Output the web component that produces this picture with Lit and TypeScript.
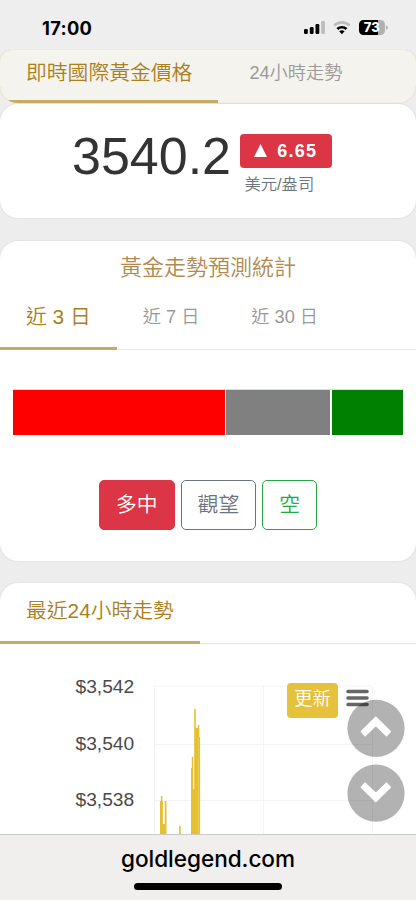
import { LitElement, html, css } from "lit";
import { customElement, property } from "lit/decorators.js";
import { classMap } from "lit/directives/class-map.js";

@customElement("status-bar")
class StatusBar extends LitElement {
  static styles = css`
    :host { display: flex; height: 50px; padding: 0 28px 0 42px; align-items: center; justify-content: space-between; box-sizing: border-box; background: #eee; }
    .time { font: 700 18.3px/22px Inter, sans-serif; color: #000; padding-top: 5px; letter-spacing: 0.3px; }
    svg { display: block; margin-top: 5px; }
    .level { font: 800 13px Inter, sans-serif; fill: #fff; }
  `;
  render() {
    return html`
      <span class="time">17:00</span>
      <svg width="86" height="18" viewBox="302 19 86 18">
        <rect x="304" y="29" width="3.8" height="5" rx="1.2"/>
        <rect x="309.8" y="27" width="3.8" height="7" rx="1.2"/>
        <rect x="315.5" y="24" width="3.8" height="10" rx="1.2"/>
        <rect x="321.2" y="21" width="3.8" height="13" rx="1.2" fill="#bdbdbd"/>
        <path d="M334.2 25.6a11 11 0 0 1 15.4 0" fill="none" stroke="#bdbdbd" stroke-width="2.8"/>
        <path d="M337.3 29a6.8 6.8 0 0 1 9.2 0" fill="none" stroke="#000" stroke-width="2.6"/>
        <path d="M339.2 31.3a4.2 4.2 0 0 1 5.4 0l-2.7 2.9z"/>
        <rect x="359" y="20" width="26" height="15" rx="4.6" fill="#b0b0b0"/>
        <path d="M363.6 20H378v15h-14.4a4.6 4.6 0 0 1-4.6-4.6v-5.8a4.6 4.6 0 0 1 4.6-4.6z"/>
        <path d="M386 25.2q1.8.6 1.8 2.3t-1.8 2.3z" fill="#b0b0b0"/>
        <text class="level" x="371.8" y="32.2" text-anchor="middle">73</text>
      </svg>`;
  }
}

@customElement("tab-strip")
class TabStrip extends LitElement {
  @property({ attribute: false }) tabs: string[] = [];
  static styles = css`
    :host { display: flex; gap: var(--gap, 0); box-sizing: border-box; font: 350 18.2px/24px "Liberation Sans", "Noto Sans CJK TC", sans-serif; color: #999; border-bottom: 1.5px solid #e6e6e6; }
    .tab { padding: var(--top, 10px) 26px 0; box-sizing: border-box; white-space: nowrap; }
    .active { font-size: 20.8px; color: #aa7f1c; border-bottom: 3px solid #c5ab67; margin-bottom: -1px; }
  `;
  render() {
    return this.tabs.map((t, i) => html`<div class=${classMap({ tab: true, active: i === 0 })}>${t}</div>`);
  }
}

@customElement("app-root")
class AppRoot extends LitElement {
  static styles = css`
    :host { display: flex; flex-direction: column; position: relative; height: 900px; overflow: hidden; background: #ededed; font: 350 20.8px/24px "Liberation Sans", "Noto Sans CJK TC", sans-serif; color: #333; }
    * { box-sizing: border-box; }
    .top { height: 53px; flex: none; background: #f5f3ee; border-radius: 12px 12px 18px 18px; overflow: hidden; box-shadow: 0 0 1px #d9bf80; }
    .top tab-strip { height: 53px; --top: 11px; --gap: 5px; border-color: #f2eee3; }
    .card { flex: none; background: #fff; border-radius: 18px; overflow: hidden; box-shadow: 0 0 2px #0002; }
    .price { display: flex; justify-content: center; height: 114px; margin: 1px 0 23px; padding: 22px 12px 0 0; gap: 8.5px; }
    .value { font-size: 52px; line-height: 60px; }
    .side { display: flex; flex-direction: column; padding-top: 8px; }
    .badge { display: flex; justify-content: center; align-items: center; gap: 10px; width: 92.5px; height: 33.5px; background: #dc3545; color: #fff; border-radius: 4px; font-size: 18px; font-weight: 700; letter-spacing: 1.3px; }
    .badge svg { fill: #fff; }
    .unit { font-size: 16.3px; color: #6c757d; padding: 4px 0 0 5px; }
    .forecast { height: 320px; margin-bottom: 22px; }
    .title { font-size: 22px; line-height: 30px; text-align: center; color: #b08a50; padding-top: 12px; }
    .forecast tab-strip { height: 67px; --top: 22px; }
    .ratio { display: flex; gap: 1.4px; height: 46px; margin: 39px 13px 45px; border-top: 1px solid #d8dede; }
    .seg { height: 45px; }
    .red { background: #f00; } .gray { background: #808080; } .green { background: #008000; }
    .actions { display: flex; justify-content: center; gap: 6px; }
    .btn { height: 50px; padding: 0 16px; border: 1.3px solid; border-radius: 5px; line-height: 47px; }
    .long { background: #dc3545; border-color: #dc3545; color: #fff; }
    .hold { color: #6c757d; } .short { color: #28a745; }
    .trend { height: 270px; border-radius: 18px 18px 0 0; }
    .trend tab-strip { height: 60.5px; --top: 16px; }
    .chart { position: relative; height: 190px; }
    .plot { display: block; }
    .plot text { font: 400 19.2px "Liberation Sans", sans-serif; fill: #4a4a4a; }
    .refresh { position: absolute; left: 287px; top: 39px; width: 51px; height: 35px; border-radius: 4px; background: #e6c23c; color: #fff; font-size: 18.2px; line-height: 33px; text-align: center; }
    .menu { position: absolute; left: 346px; top: 689px; }
    .nav { position: absolute; left: 347px; top: 699px; }
    footer { position: absolute; left: 0; right: 0; bottom: 0; height: 66px; display: flex; flex-direction: column; align-items: center; background: #f0efed; border-top: 1px solid #c9c9c9; padding-top: 9px; font: 550 22.6px/30px Inter, sans-serif; letter-spacing: -0.05px; color: #000; }
    .home { width: 148px; height: 6.5px; border-radius: 4px; background: #000; margin-top: 9px; }
  `;
  render() {
    return html`
      <status-bar></status-bar>
      <div class="top"><tab-strip .tabs=${["即時國際黃金價格", "24小時走勢"]}></tab-strip></div>
      <section class="card price">
        <div class="value">3540.2</div>
        <div class="side">
          <div class="badge"><svg width="13" height="13"><path d="M6.5 0 13 13H0z"/></svg><span>6.65</span></div>
          <div class="unit">美元/盎司</div>
        </div>
      </section>
      <section class="card forecast">
        <div class="title">黃金走勢預測統計</div>
        <tab-strip .tabs=${["近 3 日", "近 7 日", "近 30 日"]}></tab-strip>
        <div class="ratio">
          ${[["red", 212], ["gray", 104], ["green", 71.5]].map(([c, w]) => html`<div class="seg ${c}" style="flex:${w}"></div>`)}
        </div>
        <div class="actions">
          <div class="btn long">多中</div><div class="btn hold">觀望</div><div class="btn short">空</div>
        </div>
      </section>
      <section class="card trend">
        <tab-strip .tabs=${["最近24小時走勢"]}></tab-strip>
        <div class="chart">
          <svg class="plot" width="416" height="190" viewBox="0 644 416 190">
            <path d="M154 686H372.5M154 744.5H372.5M154 800.5H372.5M154.5 686V834M263.5 686V834M372.5 686V834" stroke="#f4f4f4" fill="none"/>
            <path fill="#e6c02f" d="M160 834V801h.9v-5h1.5v5h.5v23h1.9v-23h1.7v33zM179.1 834v-8h1.6v8zM191 834v-66h.8v-11h1.5v32h.9v-80h1.6v19h2v-3h1.5v12h.8v97z"/>
            <path fill="#edcf61" d="M198.2 834v-97h.8v97z"/>
            <text x="75.5" y="693">$3,542</text><text x="75.5" y="750">$3,540</text><text x="75.5" y="806">$3,538</text>
          </svg>
          <div class="refresh">更新</div>
        </div>
      </section>
      <svg class="menu" width="23" height="20"><path d="M2 2.5H21M2 9H21M2 15.5H21" stroke="#666" stroke-width="3.6" stroke-linecap="round"/></svg>
      <svg class="nav" width="58" height="124" viewBox="347 699 58 124">
        <g fill="#000" fill-opacity="0.3"><circle cx="376" cy="728.3" r="28.6"/><circle cx="376" cy="793.2" r="28.6"/></g>
        <path d="M375.8 717.3 390.2 731.5 386.5 735.6 375.8 725.2 365.1 735.6 361.4 731.5zM375.8 801.5 390.2 787.3 386.5 783.2 375.8 793.6 365.1 783.2 361.4 787.3z" fill="#fff" stroke="#fff" stroke-width="1.6" stroke-linejoin="round"/>
      </svg>
      <footer>goldlegend.com<div class="home"></div></footer>`;
  }
}
